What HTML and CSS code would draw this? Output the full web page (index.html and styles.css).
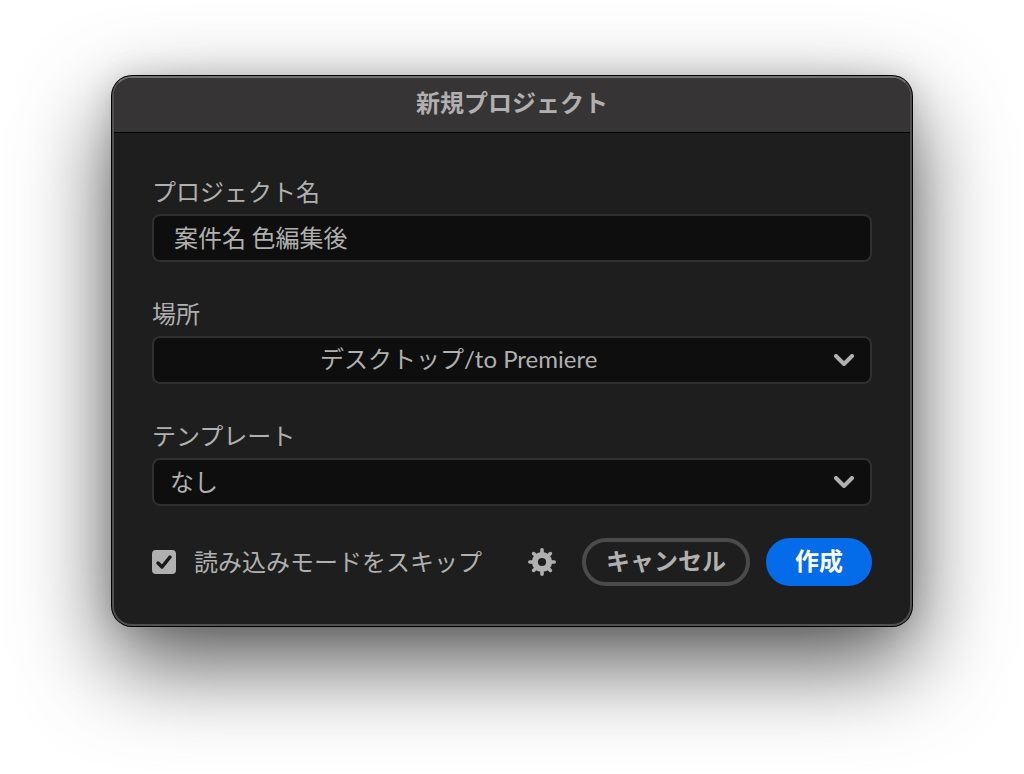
FILE: index.html
```
<!DOCTYPE html>
<html lang="ja">
<head>
    <meta charset="UTF-8">
    <meta name="viewport" content="width=device-width, initial-scale=1">
    <title>新規プロジェクト</title>
    <link rel="stylesheet" href="styles.css">
</head>
<body>

<form class="dialog">
    <h1 class="titlebar">新規プロジェクト</h1>

    <div class="content">
        <div class="field">
            <label for="name">プロジェクト名</label>
            <input class="control" type="text" id="name" value="案件名 色編集後">
        </div>

        <div class="field">
            <label for="location">場所</label>
            <div class="dropdown">
                <select class="control location" id="location">
                    <option>デスクトップ/to Premiere</option>
                </select>
                <svg class="chevron" width="20" height="12" viewBox="0 0 20 12"><path d="M2 2l8 8 8-8"/></svg>
            </div>
        </div>

        <div class="field">
            <label for="template">テンプレート</label>
            <div class="dropdown">
                <select class="control" id="template">
                    <option>なし</option>
                </select>
                <svg class="chevron" width="20" height="12" viewBox="0 0 20 12"><path d="M2 2l8 8 8-8"/></svg>
            </div>
        </div>

        <div class="footer">
            <label class="skip">
                <span class="check">
                    <input type="checkbox" checked>
                    <svg width="24" height="24" viewBox="0 0 24 24"><path d="M6 13l4 4 8-10"/></svg>
                </span>
                <span class="skip-text">読み込みモードをスキップ</span>
            </label>
            <button class="settings" type="button" aria-label="設定">
                <svg width="28" height="28" viewBox="-14 -14 28 28">
                    <g stroke="#b0b0b0" stroke-width="3.6" stroke-linecap="round">
                        <path d="M0 -12.2V-8M0 12.2V8M-12.2 0H-8M12.2 0H8"/>
                        <path d="M-8.4 -8.4l3 3M8.4 -8.4l-3 3M-8.4 8.4l3 -3M8.4 8.4l-3 -3"/>
                    </g>
                    <circle r="7.1" fill="none" stroke="#b0b0b0" stroke-width="6"/>
                </svg>
            </button>
            <button class="button cancel" type="button">キャンセル</button>
            <button class="button create" type="button">作成</button>
        </div>
    </div>
</form>

</body>
</html>
```
FILE: styles.css
```
* { box-sizing: border-box; }
body {
    min-height: 100vh;
    margin: 0;
    padding: 76px 112px;
    background: #fff;
    color: #b0b0b0;
    font: 24px/34px "Noto Sans CJK JP", sans-serif;
    overflow-x: hidden;
}
input, select, button {
    margin: 0;
    color: inherit;
    font: inherit;
}
.dialog {
    max-width: 800px;
    margin: 0 auto;
    border: 2px solid #505050;
    border-top-color: #737172;
    border-radius: 20px;
    background: #1e1e1e;
    box-shadow: 0 0 0 1px #000, 0 36px 92px rgba(0, 0, 0, 0.68), 0 0 30px rgba(0, 0, 0, 0.14);
}
.titlebar {
    margin: 0;
    padding: 7px 0 13px;
    border-bottom: 1px solid #000;
    border-radius: 18px 18px 0 0;
    background: #363435;
    font-size: 24px;
    font-weight: 700;
    text-align: center;
}
.content { padding: 41px 38px 38px; }
.field {
    display: flex;
    flex-direction: column;
    gap: 6px;
}
.field + .field { margin-top: 34px; }
.control {
    display: block;
    width: 100%;
    height: 48px;
    padding: 0 20px 4px;
    border: 2px solid #303030;
    border-radius: 8px;
    background: #0e0e0e;
    appearance: none;
}
.dropdown { position: relative; }
.dropdown .control { padding: 0 48px 2px 16px; }
.dropdown .location {
    padding-left: 166px;
    font-family: Lato, "Noto Sans CJK JP", sans-serif;
}
.chevron {
    position: absolute;
    top: 18px;
    right: 18px;
    pointer-events: none;
}
.chevron path {
    fill: none;
    stroke: #b0b0b0;
    stroke-width: 4;
    stroke-linecap: round;
    stroke-linejoin: round;
}
.footer {
    display: flex;
    align-items: center;
    margin-top: 32px;
}
.skip {
    display: flex;
    align-items: center;
    gap: 18px;
    margin-right: auto;
}
.skip-text { padding-bottom: 2px; }
.check {
    display: grid;
    width: 24px;
    height: 24px;
}
.check input, .check svg { grid-area: 1 / 1; }
.check input {
    width: 24px;
    height: 24px;
    border-radius: 4px;
    background: #b0b0b0;
    appearance: none;
}
.check svg { pointer-events: none; }
.check path {
    fill: none;
    stroke: #1a1a1a;
    stroke-width: 3.5;
    stroke-linecap: round;
    stroke-linejoin: round;
}
.check input:not(:checked) + svg { display: none; }
.settings {
    display: flex;
    margin-right: 26px;
    padding: 0;
    border: 0;
    background: none;
}
.button {
    height: 48px;
    padding: 0 20px 4px;
    border: 4px solid #4b4b4b;
    border-radius: 24px;
    background: none;
    font-weight: 700;
}
.create {
    margin-left: 16px;
    padding: 0 25px 4px;
    border-color: #056ce9;
    background: #056ce9;
    color: #fff;
}
```
